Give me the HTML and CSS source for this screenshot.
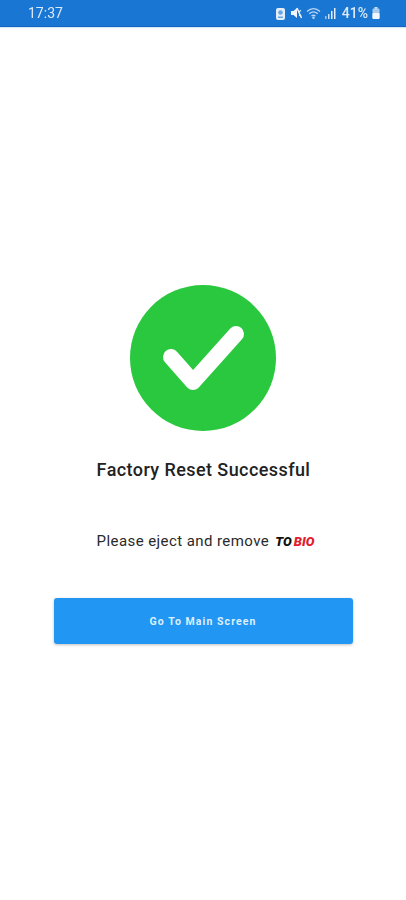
FILE: index.html
```html
<!DOCTYPE html>
<html lang="en">
<head>
<meta charset="UTF-8">
<meta name="viewport" content="width=device-width, initial-scale=1.0">
<title>Factory Reset</title>
<link rel="stylesheet" href="styles.css">
</head>
<body>
  <div class="status-bar">
    <span class="clock">17:37</span>
    <div class="status-icons">
      <!-- alert badge -->
      <svg width="11" height="13" viewBox="0 0 11 13"><rect x="1" y="1" width="9" height="12" rx="2" fill="#e3eefa"/><circle cx="5.5" cy="5.5" r="2.3" fill="#6ba5e0"/><rect x="3" y="9.5" width="5" height="1.5" fill="#6ba5e0"/></svg>
      <!-- mute -->
      <svg width="12" height="12" viewBox="0 0 12 12"><path d="M1 4h2.500L7 1v10L3.500 8H1z" fill="#eef5fc"/><path d="M7 1l4.500 10" stroke="#eef5fc" stroke-width="1.5"/><path d="M9 4.500l2 -1M9 8l2 1" stroke="#eef5fc" stroke-width="1.2"/></svg>
      <!-- wifi -->
      <svg width="15" height="12" viewBox="0 0 15 12" fill="none" stroke="#b9d4f0" stroke-width="1.3"><path d="M1 4.500C5 .8 10 .8 14 4.500"/><path d="M3.200 6.800C6 4.300 9 4.300 11.800 6.800"/><path d="M5.500 9C6.800 8 8.200 8 9.500 9"/><circle cx="7.500" cy="10.800" r=".6" fill="#b9d4f0"/></svg>
      <!-- signal -->
      <svg width="11" height="12" viewBox="0 0 11 12"><rect x="0" y="9" width="1.5" height="3" fill="#9cc3ec"/><rect x="3" y="7" width="1.5" height="5" fill="#c9def4"/><rect x="6" y="4" width="1.5" height="8" fill="#e3eefa"/><rect x="9" y="1" width="1.5" height="11" fill="#e3eefa"/></svg>
      <span class="battery-level">41%</span>
      <!-- battery -->
      <svg width="8" height="12" viewBox="0 0 8 12"><rect x="2.500" y="0" width="3" height="2" fill="#cfe1f5"/><rect x="0.500" y="1.500" width="7" height="10.500" rx="1" fill="#a9cbee"/><rect x="0.500" y="6" width="7" height="6" rx="1" fill="#f2f7fd"/></svg>
    </div>
  </div>

  <main class="content">
    <svg class="check" width="146" height="146" viewBox="0 0 146 146">
      <circle cx="73" cy="73" r="73" fill="#2ac83e"/>
      <path d="M41 72L63 97L106 49" stroke="#fff" stroke-width="16" stroke-linecap="round" stroke-linejoin="round" fill="none"/>
    </svg>
    <h1 class="title">Factory Reset Successful</h1>
    <p class="message">Please eject and remove <span class="logo"><span class="logo-to">TO</span><span class="logo-bio">BIO</span></span></p>
    <button class="button">Go To Main Screen</button>
  </main>
</body>
</html>
```

FILE: styles.css
```css
body {
  margin: 0;
  min-height: 100vh;
  background-color: #fff;
  font-family: Roboto, "Liberation Sans", sans-serif;
}
.status-bar {
  height: 26px;
  padding: 0 26px 0 28px;
  display: flex;
  justify-content: space-between;
  align-items: center;
  background-color: #1976d2;
  border-bottom: 1px solid #1565c0;
  box-shadow: 0 1px 1px #d5e6f7;
  color: #dbe9f8;
}
.clock {
  font-size: 14px;
  filter: blur(0.4px);
}
.status-icons {
  display: flex;
  align-items: center;
  gap: 4px;
  filter: blur(0.5px);
}
.battery-level {
  font-size: 14px;
  font-weight: 500;
  margin-left: 2px;
}
.content {
  padding-top: 258px;
  display: flex;
  flex-direction: column;
  align-items: center;
}
.title {
  margin: 27px 0 0 1px;
  font-size: 18px;
  line-height: 24px;
  font-weight: 500;
  letter-spacing: 0.42px;
  color: #222;
}
.message {
  margin: 49px 0 0 5px;
  font-size: 15px;
  line-height: 20px;
  letter-spacing: 0.42px;
  color: #2a2a2a;
}
.logo {
  margin-left: 2px;
  font-size: 13px;
  font-weight: 900;
  font-style: italic;
  letter-spacing: 0;
}
.logo-to {
  color: #111;
}
.logo-bio {
  margin-left: 2px;
  color: #e0202f;
}
.button {
  width: 299px;
  height: 46px;
  margin-top: 46px;
  border: none;
  border-radius: 3px;
  background-color: #2196f3;
  box-shadow: 0 1px 3px rgba(0, 0, 0, 0.25);
  color: #dcefff;
  font-family: Roboto, "Liberation Sans", sans-serif;
  font-size: 10.5px;
  font-weight: 700;
  letter-spacing: 1.08px;
}
```
